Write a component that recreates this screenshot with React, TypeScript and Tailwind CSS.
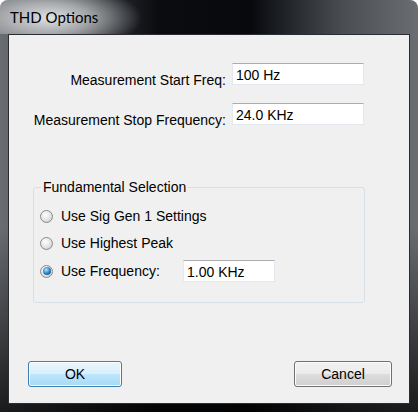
import React from "react";

const ui = "font-['Liberation_Sans',Arial,sans-serif] text-[14px] leading-[16px] text-black";

function TextBox({ value, className }: { value: string; className: string }) {
  return (
    <div
      className={`h-[22px] bg-white border border-[#e3e9ef] border-t-[#abadb3] px-[3px] pt-[3px] ${className}`}
    >
      {value}
    </div>
  );
}

function Radio({ checked }: { checked?: boolean }) {
  return (
    <div className="w-[13px] h-[13px] rounded-full border border-[#8a8a8a] bg-[radial-gradient(circle_at_40%_35%,#ffffff,#e0e0e0_60%,#bdbdbd)] flex items-center justify-center shrink-0">
      {checked && (
        <div className="w-[8px] h-[8px] rounded-full bg-[radial-gradient(circle_at_40%_35%,#b4e6fa,#2a86c8_50%,#0b3a63)]" />
      )}
    </div>
  );
}

function RadioRow({ label, checked, children }: { label: string; checked?: boolean; children?: React.ReactNode }) {
  return (
    <div className="flex items-center h-[22px]">
      <Radio checked={checked} />
      <span className={`ml-[8px] ${children ? "w-[122px]" : ""}`}>{label}</span>
      {children}
    </div>
  );
}

export default function App() {
  return (
    <div className="w-[418px] h-[412px] rounded-t-[8px] overflow-hidden bg-[linear-gradient(90deg,#6a6d71_0%,#3a3d41_18%,#0a0c10_38%,#07090d_60%,#4a4e53_82%,#6a6d72_100%)] relative">
      <div className="absolute inset-0 bg-[linear-gradient(180deg,transparent_0%,transparent_55%,rgba(0,0,0,0.75)_100%)] pointer-events-none" />
      <div className="relative h-[34px] flex items-center pl-[10px] bg-[radial-gradient(ellipse_92px_34px_at_50px_18px,rgba(232,234,236,0.95)_0%,rgba(205,207,210,0.7)_45%,rgba(150,152,155,0)_100%)]">
        <span className="font-['Lato',sans-serif] text-[15px] text-black leading-[20px]">
          THD Options
        </span>
      </div>
      <div className={`relative mx-[8px] h-[370px] bg-[#f0f0f0] border border-[#2a2d31] ${ui} flex flex-col`}>
        {/* Frequencies */}
        <div className="flex items-start mt-[28px]">
          <div className="w-[217px] text-right pt-[9px]">Measurement Start Freq:</div>
          <TextBox value="100 Hz" className="ml-[6px] w-[132px]" />
        </div>
        <div className="flex items-start mt-[15px]">
          <div className="w-[217px] text-right pt-[9px]">Measurement Stop Frequency:</div>
          <TextBox value="24.0 KHz" className="ml-[6px] w-[132px]" />
        </div>

        {/* Fundamental selection */}
        <fieldset className="ml-[24px] mt-[51px] w-[332px] border border-[#d5dfe5] rounded-[3px] pl-[6px] pb-[20px]">
          <legend className="ml-[1px] px-[2px]">Fundamental Selection</legend>
          <div className="mt-[10px]">
            <RadioRow label="Use Sig Gen 1 Settings" />
          </div>
          <div className="mt-[5px]">
            <RadioRow label="Use Highest Peak" />
          </div>
          <div className="mt-[6px]">
            <RadioRow label="Use Frequency:" checked>
              <TextBox value="1.00 KHz" className="w-[92px]" />
            </RadioRow>
          </div>
        </fieldset>

        {/* Buttons */}
        <div className="flex justify-between mt-[58px] pl-[19px] pr-[17px]">
          <button className="w-[94px] h-[26px] rounded-[3px] border border-[#3c7fb1] bg-[linear-gradient(180deg,#eaf6fd_0%,#d9f0fc_50%,#bee6fd_51%,#a7d9f5_100%)] shadow-[inset_0_0_0_1px_#ffffff]">
            OK
          </button>
          <button className="w-[98px] h-[26px] rounded-[3px] border border-[#707070] bg-[linear-gradient(180deg,#f2f2f2_0%,#ebebeb_50%,#dddddd_51%,#cfcfcf_100%)] shadow-[inset_0_0_0_1px_#fcfcfc]">
            Cancel
          </button>
        </div>
      </div>
    </div>
  );
}
